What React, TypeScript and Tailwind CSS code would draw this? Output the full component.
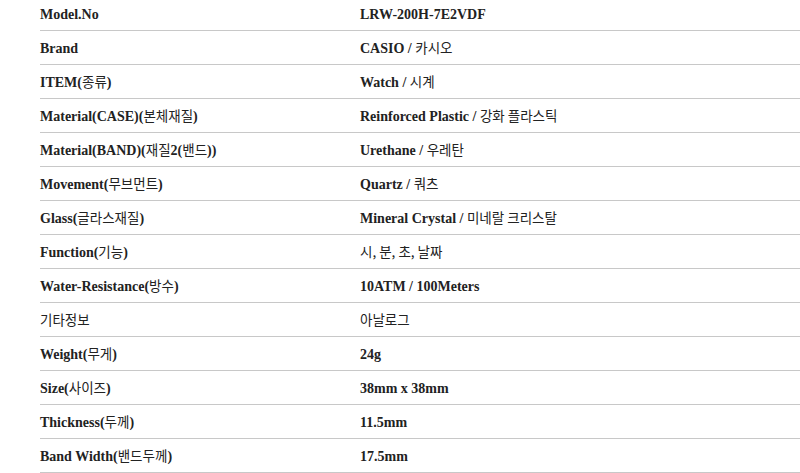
import React from 'react';

interface SpecRow {
    label: string;
    value: string;
}

const specs: SpecRow[] = [
    { label: 'Model.No', value: 'LRW-200H-7E2VDF' },
    { label: 'Brand', value: 'CASIO / 카시오' },
    { label: 'ITEM(종류)', value: 'Watch / 시계' },
    { label: 'Material(CASE)(본체재질)', value: 'Reinforced Plastic / 강화 플라스틱' },
    { label: 'Material(BAND)(재질2(밴드))', value: 'Urethane / 우레탄' },
    { label: 'Movement(무브먼트)', value: 'Quartz / 쿼츠' },
    { label: 'Glass(글라스재질)', value: 'Mineral Crystal / 미네랄 크리스탈' },
    { label: 'Function(기능)', value: '시, 분, 초, 날짜' },
    { label: 'Water-Resistance(방수)', value: '10ATM / 100Meters' },
    { label: '기타정보', value: '아날로그' },
    { label: 'Weight(무게)', value: '24g' },
    { label: 'Size(사이즈)', value: '38mm x 38mm' },
    { label: 'Thickness(두께)', value: '11.5mm' },
    { label: 'Band Width(밴드두께)', value: '17.5mm' },
];

// Latin text is bold serif, Hangul runs fall back to a plain sans face
const MixedText: React.FC<{ text: string }> = ({ text }) => {
    const parts = text.split(/([\uAC00-\uD7A3][\uAC00-\uD7A3 ,]*[\uAC00-\uD7A3]|[\uAC00-\uD7A3])/);
    return (
        <>
            {parts.map((part, i) =>
                /[\uAC00-\uD7A3]/.test(part) ? (
                    <span key={i} className="font-['Noto_Sans_CJK_KR',sans-serif] font-normal text-[13.5px]">
                        {part}
                    </span>
                ) : (
                    <span key={i} className="font-['Liberation_Serif',serif] font-bold">
                        {part}
                    </span>
                )
            )}
        </>
    );
};

const App: React.FC = () => {
    return (
        <div className="w-[800px] h-[473px] overflow-hidden bg-white text-[#222] text-[14px]">
            <div className="pl-[40px] -mt-[3px]">
                {specs.map((row) => (
                    <div key={row.label} className="flex items-center h-[34px] pt-[2px] border-b border-[#c8c8c8]">
                        <div className="w-[320px] shrink-0 leading-none whitespace-nowrap">
                            <MixedText text={row.label} />
                        </div>
                        <div className="flex-1 leading-none whitespace-nowrap">
                            <MixedText text={row.value} />
                        </div>
                    </div>
                ))}
            </div>
        </div>
    );
};

export default App;
